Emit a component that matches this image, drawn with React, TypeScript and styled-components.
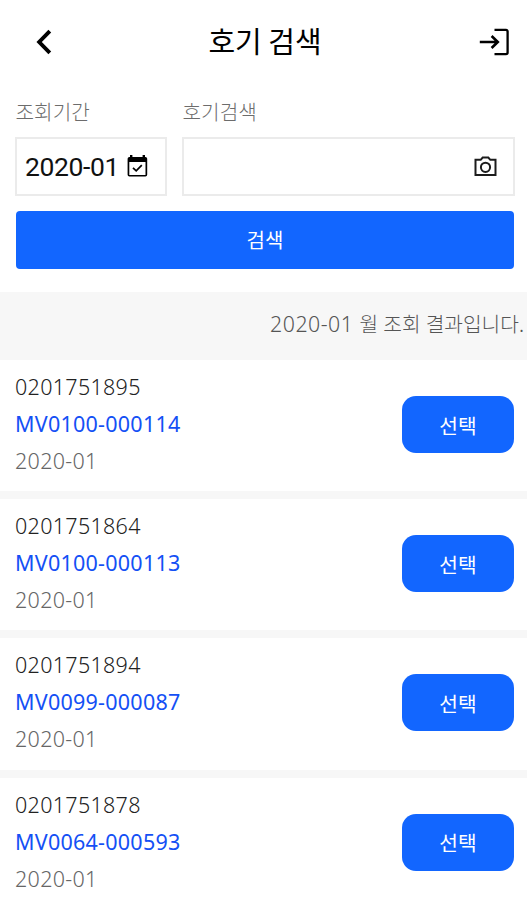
import React from 'react'
import styled, { createGlobalStyle } from 'styled-components'

interface Unit {
  serial: string
  model: string
  month: string
}

const units: Unit[] = [
  { serial: '0201751895', model: 'MV0100-000114', month: '2020-01' },
  { serial: '0201751864', model: 'MV0100-000113', month: '2020-01' },
  { serial: '0201751894', model: 'MV0099-000087', month: '2020-01' },
  { serial: '0201751878', model: 'MV0064-000593', month: '2020-01' },
]

const BackIcon = () => (
  <svg width="18" height="28" viewBox="0 0 18 28" fill="none" stroke="#000" strokeWidth="3.9">
    <path d="M14.8 3.2 4.2 14 14.8 24.8" />
  </svg>
)

const ExitIcon = () => (
  <svg width="30" height="28" viewBox="0 0 30 28" fill="none" stroke="#000" strokeWidth="2.3">
    <path d="M15.5 1.9H27a1.6 1.6 0 0 1 1.6 1.6v21a1.6 1.6 0 0 1-1.6 1.6H15.5" />
    <path d="M.8 14h17.8M12.6 8l6.2 6-6.2 6" strokeWidth="2.6" />
  </svg>
)

const CalendarIcon = () => (
  <svg width="21" height="23" viewBox="0 0 21 23">
    <path d="M3 0h2.4v2h10.2V0H18v2h.4a1.8 1.8 0 0 1 1.8 1.8v16a1.8 1.8 0 0 1-1.8 1.8H2.4a1.8 1.8 0 0 1-1.8-1.8v-16A1.8 1.8 0 0 1 2.4 2H3zM2.3 7v12.9h16.2V7z" />
    <path d="M6 12.8l3.2 3.1 5.6-5.7" fill="none" stroke="#000" strokeWidth="1.7" />
  </svg>
)

const CameraIcon = () => (
  <svg width="23" height="21" viewBox="0 0 23 21" fill="none" stroke="#1c1c1c" strokeWidth="2">
    <path d="M1.5 3.8h5.2l2-2.3h5.6l2 2.3h5.2v15.3H1.5z" />
    <circle cx="11.5" cy="11.3" r="4.6" />
  </svg>
)

const App = () => (
  <Page>
    <GlobalStyle />
    <Header>
      <BackIcon />
      <Title>호기 검색</Title>
      <ExitIcon />
    </Header>

    <SearchForm>
      <Fields>
        <Field>
          <Label>조회기간</Label>
          <MonthBox>
            <span>2020-01</span>
            <CalendarIcon />
          </MonthBox>
        </Field>
        <Field>
          <Label>호기검색</Label>
          <KeywordBox>
            <CameraIcon />
          </KeywordBox>
        </Field>
      </Fields>
      <SearchButton>검색</SearchButton>
    </SearchForm>

    <ResultInfo>
      <ResultMonth>2020-01</ResultMonth> 월 조회 결과입니다.
    </ResultInfo>

    {units.map(unit => (
      <Row key={unit.serial}>
        <Details>
          <Serial>{unit.serial}</Serial>
          <Model>{unit.model}</Model>
          <Month>{unit.month}</Month>
        </Details>
        <SelectButton>선택</SelectButton>
      </Row>
    ))}
  </Page>
)

const GlobalStyle = createGlobalStyle`
  * {
    box-sizing: border-box;
  }
  body {
    margin: 0;
    background: #fff;
    font-family: 'Noto Sans CJK KR', sans-serif;
  }
  button {
    border: 0;
    padding: 0;
    font-family: inherit;
  }
  svg {
    flex-shrink: 0;
  }
`

const Page = styled.div`
  height: 900px;
  overflow: hidden;
`

const Header = styled.header`
  display: flex;
  align-items: center;
  justify-content: space-between;
  height: 84px;
  padding: 0 18px 0 35px;
`
const Title = styled.h1`
  margin: 0 2px 4px 0;
  font-size: 29px;
  font-weight: 400;
  line-height: 40px;
  color: #000;
`

const SearchForm = styled.section`
  height: 208px;
  padding: 13px 12px 0 15px;
`
const Fields = styled.div`
  display: grid;
  grid-template-columns: 152px 1fr;
  column-gap: 15px;
`
const Field = styled.div`
  display: flex;
  flex-direction: column;
`
const Label = styled.span`
  height: 40px;
  padding-left: 0.5px;
  font-size: 20.2px;
  font-weight: 300;
  line-height: 29px;
  color: #6c6c6c;
`
const InputBox = styled.div`
  display: flex;
  align-items: center;
  height: 59px;
  border: 2px solid #ebebeb;
  background: #fff;
`
const MonthBox = styled(InputBox)`
  gap: 8px;
  padding-left: 8px;
  font-family: Roboto, sans-serif;
  font-size: 26.5px;
  letter-spacing: -0.4px;
  color: #111;
`
const KeywordBox = styled(InputBox)`
  justify-content: flex-end;
  padding-right: 16px;
`
const SearchButton = styled.button`
  display: block;
  width: 498px;
  height: 58px;
  margin: 15px 0 0 1px;
  border-radius: 4px;
  background: #1266ff;
  font-size: 20px;
  line-height: 58px;
  color: #fff;
`

const ResultInfo = styled.div`
  height: 68px;
  padding-right: 3px;
  background: #f7f7f7;
  font-size: 20.3px;
  font-weight: 300;
  line-height: 63px;
  text-align: right;
  white-space: nowrap;
  word-spacing: 0.6px;
  color: #555;
`
const ResultMonth = styled.span`
  margin-right: 1px;
  font-family: 'Noto Sans', sans-serif;
  font-size: 21.3px;
  line-height: 1;
  letter-spacing: 0.5px;
`

const Row = styled.div`
  display: flex;
  align-items: center;
  justify-content: space-between;
  height: 139.2px;
  padding: 0 13px 0 15px;
  border-bottom: 8px solid #f7f7f7;
`
const Details = styled.div`
  display: flex;
  flex-direction: column;
  margin-top: -4px;
`
const Line = styled.span`
  font-family: 'Noto Sans', sans-serif;
  font-size: 21.5px;
  font-weight: 300;
  line-height: 37px;
  letter-spacing: 0.3px;
`
const Serial = styled(Line)`
  color: #222;
`
const Model = styled(Line)`
  font-weight: 400;
  letter-spacing: 0.25px;
  color: #1450f5;
`
const Month = styled(Line)`
  color: #666;
`
const SelectButton = styled.button`
  width: 112px;
  height: 57px;
  margin-top: -2px;
  border-radius: 14px;
  background: #1266ff;
  font-size: 20.3px;
  color: #fff;
`

export default App
